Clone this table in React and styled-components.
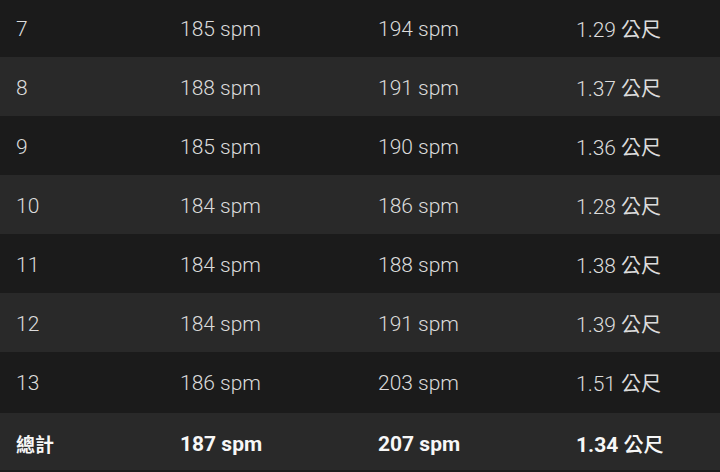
import React from "react";
import styled, { createGlobalStyle } from "styled-components";

const Global = createGlobalStyle`
  html, body { margin: 0; padding: 0; background: #1b1b1b; overflow: hidden; }
  body { font-family: Roboto, "Noto Sans CJK TC", sans-serif; }
  * { box-sizing: border-box; }
`;

const Table = styled.div`
  width: 720px;
  height: 472px;
  overflow: hidden;
  display: flex;
  flex-direction: column;
  margin-top: -2px;
`;

const Row = styled.div`
  flex: none;
  display: grid;
  grid-template-columns: 164px 198px 198px 1fr;
  align-items: center;
  height: ${(p) => (p.$total ? "61px" : "59px")};
  padding: 2px 0 0 16px;
  background: ${(p) => (p.$alt ? "#292929" : "#1b1b1b")};
  border-top: ${(p) => (p.$total ? "2px solid #1b1b1b" : "none")};
  color: ${(p) => (p.$total ? "#f7f7f7" : "#dcdcdc")};
  font-size: 21px;
  font-weight: ${(p) => (p.$total ? 700 : 300)};
`;

const Cell = styled.div`
  white-space: nowrap;
`;

const Unit = styled.span`
  font-family: "Noto Sans CJK TC", sans-serif;
  font-weight: ${(p) => (p.$total ? 500 : 400)};
  font-size: 20px;
`;

const Label = styled.span`
  font-family: "Noto Sans CJK TC", sans-serif;
  font-size: 19px;
  font-weight: 700;
`;

const rows = [
  ["7", 185, 194, "1.29"],
  ["8", 188, 191, "1.37"],
  ["9", 185, 190, "1.36"],
  ["10", 184, 186, "1.28"],
  ["11", 184, 188, "1.38"],
  ["12", 184, 191, "1.39"],
  ["13", 186, 203, "1.51"],
];

export default function App() {
  return (
    <>
      <Global />
      <Table>
        {rows.map((r, i) => (
          <Row key={r[0]} $alt={i % 2 === 1}>
            <Cell>{r[0]}</Cell>
            <Cell>{r[1]} spm</Cell>
            <Cell>{r[2]} spm</Cell>
            <Cell>
              {r[3]} <Unit>公尺</Unit>
            </Cell>
          </Row>
        ))}
        <Row $alt $total>
          <Cell>
            <Label>總計</Label>
          </Cell>
          <Cell>187 spm</Cell>
          <Cell>207 spm</Cell>
          <Cell>
            1.34 <Unit $total>公尺</Unit>
          </Cell>
        </Row>
      </Table>
    </>
  );
}
